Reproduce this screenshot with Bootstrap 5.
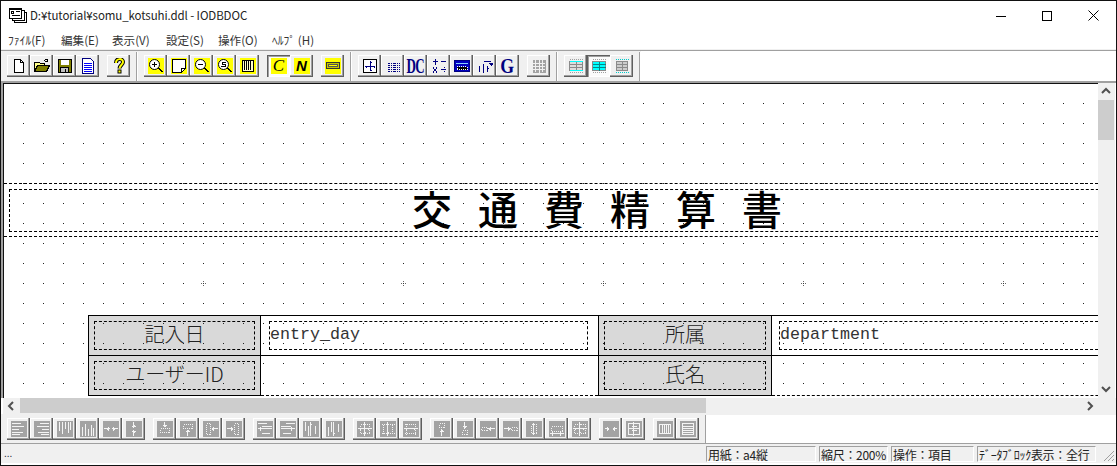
<!DOCTYPE html>
<html lang="ja">
<head>
    <meta charset="UTF-8">
    <meta name="viewport" content="width=device-width, initial-scale=1.0">
    <title>IODBDOC</title>
    <link href="https://cdn.jsdelivr.net/npm/bootstrap@5.3.0/dist/css/bootstrap.min.css" rel="stylesheet">
    <style>
        html, body { height: 100%; overflow: hidden; background: #fff; }
        body { font-family: "Noto Sans CJK JP", sans-serif; font-size: 12px; color: #000; }
        .app-window { width: 1117px; height: 466px; border: 1px solid #111; background: #fff; }
        .title-row { height: 29px; padding-left: 8px; }
        .title-text { margin-left: 3px; font-size: 11.5px; color: #222; letter-spacing: -.09px; white-space: nowrap; }
        .win-key { width: 46px; height: 29px; }
        .menu-row { height: 20px; color: #333; font-size: 11.6px; line-height: 1; border-bottom: 1px solid #f0f0f0; }
        .menu-item { position: absolute; top: 34px; }
        .tool-row { height: 31px; border-top: 1px solid #a0a0a0; padding-left: 6px; }
        .tool-face { background: #f0f0f0; }
        .tool-lower { height: 29px; border-top: 1px solid #f0f0f0; }
        .tool-key.btn {
            width: 23px; height: 22px; padding: 0; border: 0; border-radius: 0; background: #f0f0f0;
            box-shadow: inset -1px -1px #5f5f5f, inset -2px -2px #a0a0a0, inset 1px 1px #fff;
            display: flex; align-items: center; justify-content: center; flex: none; line-height: 1;
        }
        .tool-key.key-down { background: #fbfbfb; box-shadow: inset 1px 1px #5f5f5f, inset 2px 2px #a0a0a0, inset -1px -1px #fff; }
        .tool-key svg { display: block; width: 16px; height: 16px; }
        .tool-set { display: flex; margin-right: 8px; }
        .tool-set.set-end { margin-right: 6px; }
        .tool-rule { width: 2px; height: 29px; border-left: 1px solid #a0a0a0; border-right: 1px solid #fff; }
        .rule-gap { margin-right: 6px; }
        .ico { fill: none; stroke: #000; shape-rendering: crispEdges; }
        .ico-y { background: #ff0; }
        .ico-off { background: #a3a3a3; stroke: #f4f4f4; }
        .ico-navy { stroke: #000080; }
        .key-letter { width: 16px; height: 16px; background: #ff0; color: #000; text-align: center; }
        .letter-c { font: italic 400 17px/16px "Liberation Serif", serif; }
        .letter-n { font: italic 700 15px/16px "Liberation Sans", sans-serif; }
        .key-navy { display: block; font: 700 21px/1 "Liberation Serif", serif; color: #000080; }
        .navy-dc { letter-spacing: -1px; transform: scaleX(.62); }
        .navy-g { transform: scaleX(.85); }
        .work-row { height: 317px; border-top: 2px solid #a0a0a0; border-left: 2px solid #a0a0a0; }
        .sheet {
            width: 1095px; position: relative; overflow: hidden; border-top: 1px solid #111; border-left: 1px solid #111;
            background-color: #fff;
        }
        .sheet, .label-cell {
            background-image: conic-gradient(from 270deg at 1px 1px, #222 90deg, transparent 0);
            background-size: 20px 20px; background-position: 3px 3px; background-attachment: fixed;
        }
        .v-scroll { width: 17px; background: #f0f0f0; position: relative; }
        .v-thumb { position: absolute; left: 0; top: 17px; width: 16px; height: 40px; background: #cdcdcd; }
        .arrow-key { position: absolute; fill: none; stroke: #505050; stroke-width: 2; }
        .h-scroll { height: 16px; background: #f0f0f0; position: relative; margin-left: 2px; }
        .h-thumb { position: absolute; left: 17px; top: 0; width: 686px; height: 15px; background: #cdcdcd; }
        .dash-band { position: absolute; left: 0; width: 100%; height: 54px; top: 99px; border-top: 1px dashed #000; border-bottom: 1px dashed #000; }
        .dash-box { position: absolute; border: 1px dashed #000; }
        .band-inner { left: 5px; top: 105px; width: 1200px; height: 43px; }
        .sheet-title { position: absolute; left: 408px; top: 97px; font-size: 40px; line-height: 54px; font-weight: 500; letter-spacing: 26px; white-space: nowrap; }
        .grid-mark { position: absolute; top: 199px; width: 1px; height: 1px; background: #333; box-shadow: 0 -2px #666, 0 2px #666, -2px 0 #666, 2px 0 #666; }
        .form-grid { position: absolute; left: 84px; top: 231px; width: 1100px; display: grid; grid-template-columns: 173px 337px 174px 1fr; grid-template-rows: 40px 40px; border-top: 1px solid #000; }
        .label-cell, .value-cell { position: relative; border-bottom: 1px solid #000; }
        .label-cell { background-color: #d9d9d9; border-left: 1px solid #000; border-right: 1px solid #000; display: flex; align-items: center; justify-content: center; padding-bottom: 3px; font-size: 20px; font-weight: 300; color: #222; line-height: 1; }
        .value-cell { font: 16.67px/1 "Liberation Mono", monospace; color: #333; }
        .row-end { border-bottom: 1px dashed #000; }
        .label-box { left: 5px; top: 5px; right: 5px; bottom: 5px; }
        .value-box { left: 9px; top: 5px; width: 319px; height: 29px; padding: 5px 0 0 0; margin-left: -1px; }
        .value-long { width: 600px; margin-left: -2px; }
        .status-row { height: 20px; border-top: 1px solid #a0a0a0; background: #f0f0f0; position: relative; }
        .status-dots { position: absolute; left: 3px; top: 4px; font: 10px/12px "Liberation Sans", sans-serif; color: #123; }
        .status-cell { position: absolute; top: 2px; height: 16px; border-top: 1px solid #a0a0a0; border-left: 1px solid #a0a0a0; border-right: 1px solid #fff; border-bottom: 1px solid #fff; padding-left: 1px; line-height: 15px; font-size: 12px; color: #222; white-space: nowrap; letter-spacing: -.3px; }
        .size-grip { position: absolute; right: 1px; bottom: 1px; }
    </style>
</head>
<body>
<div class="app-window d-flex flex-column position-relative">
    <div class="title-row d-flex align-items-center">
        <svg width="18" height="16" viewBox="0 0 18 16" class="ico"><path d="M5.5 4.5h12v10h-12z" fill="#fff"/><path d="M3.5 2.5h12v10h-12z" fill="#fff"/><path d="M.5 .5h12v10h-12z" fill="#fff"/><path d="M.5 1.5h12" stroke="#000"/><path d="M2.5 3.5h2v2h-2zM6.5 3.5h4M2.5 7.5h8" stroke="#000"/></svg>
        <span class="title-text">D:¥tutorial¥somu_kotsuhi.ddl - IODBDOC</span>
        <div class="ms-auto d-flex">
            <div class="win-key d-flex align-items-center justify-content-center"><svg width="10" height="10" viewBox="0 0 10 10" class="ico"><path d="M0 5.5h10"/></svg></div>
            <div class="win-key d-flex align-items-center justify-content-center"><svg width="10" height="10" viewBox="0 0 10 10" class="ico"><path d="M.5 .5h9v9h-9z"/></svg></div>
            <div class="win-key d-flex align-items-center justify-content-center"><svg width="11" height="11" viewBox="0 0 11 11" fill="none" stroke="#000"><path d="M.5 .5l10 10M10.5 .5l-10 10"/></svg></div>
        </div>
    </div>
    <div class="menu-row">
        <span class="menu-item" style="left:7px">ﾌｧｲﾙ(F)</span>
        <span class="menu-item" style="left:60px">編集(E)</span>
        <span class="menu-item" style="left:111px">表示(V)</span>
        <span class="menu-item" style="left:165px">設定(S)</span>
        <span class="menu-item" style="left:217px">操作(O)</span>
        <span class="menu-item" style="left:271px">ﾍﾙﾌﾟ (H)</span>
    </div>

    <div class="tool-row d-flex">
        <div class="tool-face d-flex align-items-center" style="width:640px;margin-left:-6px;padding-left:6px">
            <div class="tool-set">
                <button class="btn tool-key"><svg class="ico" viewBox="0 0 16 16"><path d="M3.5 1.5h6l3 3v10h-9z" fill="#fff"/><path d="M9.5 1.5v3h3"/></svg></button>
                <button class="btn tool-key"><svg class="ico" viewBox="0 0 16 16"><path d="M.5 13.5v-9h5l1 1h4v2" fill="#ff8"/><path d="M.5 13.5l3-6h12l-3 6z" fill="#808000"/><path d="M9.5 3.5l2-2h2M13.5 .5v3h-3"/></svg></button>
                <button class="btn tool-key"><svg class="ico" viewBox="0 0 16 16"><path d="M1.5 1.5h13v13h-13z" fill="#808000"/><rect x="4" y="2" width="8" height="5" fill="#fff" stroke="none"/><path d="M3.5 9.5h8v5h-8z" fill="#c0c0c0"/><path d="M8.5 10.5v3" /></svg></button>
                <button class="btn tool-key"><svg class="ico ico-navy" viewBox="0 0 16 16"><path d="M2.5 .5h8l3 3v12h-11z" fill="#fff"/><path d="M4 5.5h8M4 7.5h8M4 9.5h8M4 11.5h8M4 13.5h8" stroke="#00f"/></svg></button>
            </div>
            <div class="tool-set set-end">
                <button class="btn tool-key"><svg viewBox="0 0 16 16" fill="none"><path d="M5 5c0-5 7-5 7-1 0 3-3.500 3-3.500 6.500" stroke="#000" stroke-width="4"/><path d="M5 5c0-5 7-5 7-1 0 3-3.500 3-3.500 6.500" stroke="#ff0" stroke-width="2"/><rect x="7" y="12" width="3" height="3" fill="#ff0" stroke="#000"/></svg></button>
            </div>
            <div class="tool-rule rule-gap"></div>
            <div class="tool-set">
                <button class="btn tool-key"><svg class="ico ico-y" viewBox="0 0 16 16"><circle cx="6.500" cy="6.500" r="5" fill="#fff" shape-rendering="auto"/><path d="M4 6.500h5M6.500 4v5M10 10l4 4M11 10l4 4"/></svg></button>
                <button class="btn tool-key"><svg class="ico ico-y" viewBox="0 0 16 16"><path d="M1.500 1.500h13v9l-4 4h-9z" fill="#fff"/><path d="M10.500 14.500v-4h4"/></svg></button>
                <button class="btn tool-key"><svg class="ico ico-y" viewBox="0 0 16 16"><circle cx="6.500" cy="6.500" r="5" fill="#fff" shape-rendering="auto"/><path d="M4 6.500h5M10 10l4 4M11 10l4 4"/></svg></button>
                <button class="btn tool-key"><svg class="ico ico-y" viewBox="0 0 16 16"><circle cx="6.500" cy="6.500" r="5" fill="#fff" shape-rendering="auto"/><path d="M9 4.500h-4v2h3v2h-4M10 10l4 4M11 10l4 4"/></svg></button>
                <button class="btn tool-key"><svg class="ico ico-y" viewBox="0 0 16 16"><path d="M2.500 2.500h11v11h-11z" fill="#ffc"/><path d="M4.500 3v10M6.500 3v10M8.500 3v10M10.500 3v10M4 4.500h8M4 6.500h8M4 8.500h8M4 10.500h8" stroke-dasharray="1 1"/></svg></button>
            </div>
            <div class="tool-set">
                <button class="btn tool-key key-down"><span class="key-letter letter-c">C</span></button>
                <button class="btn tool-key"><span class="key-letter letter-n">N</span></button>
            </div>
            <div class="tool-set set-end">
                <button class="btn tool-key"><svg class="ico ico-y" viewBox="0 0 16 16"><path d="M1.500 4.500h13v6h-13z" fill="#c8c800" stroke="#333"/><path d="M3.500 6.500h9v2h-9z" fill="#ff0" stroke="#555"/></svg></button>
            </div>
            <div class="tool-rule rule-gap"></div>
            <div class="tool-set">
                <button class="btn tool-key"><svg class="ico ico-navy" viewBox="0 0 16 16"><path d="M1.500 1.500h13v13h-13z" fill="#fff" stroke="#000"/><path d="M8.500 3v10M3 8.500h10M7.500 4.500h2M7.500 12.500h2M4.500 7.500v2M12.500 7.500v2"/></svg></button>
                <button class="btn tool-key"><svg class="ico ico-navy" viewBox="0 0 16 16"><path d="M3.500 5.500h11M3.500 7.500h11M3.500 9.500h11M3.500 11.500h11M3.500 13.500h11" stroke-dasharray="1 1"/><path d="M3.500 5v9M6.500 5v9M9.500 5v9M12.500 5v9" stroke-dasharray="1 1"/></svg></button>
                <button class="btn tool-key"><span class="key-navy navy-dc">DC</span></button>
                <button class="btn tool-key"><svg class="ico ico-navy" viewBox="0 0 16 16"><path d="M4.500 1v6M2 3.500h5M10 3.500h5M2 9.500l4 5M6 9.500l-4 5M10 11.500h5M12.500 9.500h1M12.500 13.500h1"/></svg></button>
                <button class="btn tool-key"><svg class="ico" viewBox="0 0 16 16"><path d="M.5 2.500h15v11h-15z" fill="#0000c0" stroke="#000080"/><path d="M2 5.500h12" stroke="#8cf"/><path d="M3 8.500h10v3h-10z" fill="#000" stroke="#fff" stroke-dasharray="1 1"/></svg></button>
                <button class="btn tool-key"><svg class="ico ico-navy" viewBox="0 0 16 16"><path d="M6.500 5.500v9M6.500 3.500h7M2.500 7.500v6M1.500 10.500h1M10.500 7.500v6M10.500 10.500h1M11.500 5.500h5M12.500 6.500h3M13.500 7.500h1"/></svg></button>
                <button class="btn tool-key"><span class="key-navy navy-g">G</span></button>
            </div>
            <div class="tool-set set-end">
                <button class="btn tool-key"><svg class="ico" viewBox="0 0 16 16" style="stroke:#a3a3a3"><path d="M2 2h5v12h-5zM9 2h5v12h-5z" fill="#a3a3a3"/><path d="M2 5.500h12M2 8.500h12M2 11.500h12M4.500 2v12M11.500 2v12" stroke="#f0f0f0"/></svg></button>
            </div>
            <div class="tool-rule rule-gap"></div>
            <div class="tool-set set-end">
                <button class="btn tool-key"><svg class="ico" viewBox="0 0 16 16" style="stroke:#8a8a8a"><path d="M1.500 1.500h13" stroke="#a0a0a0" stroke-dasharray="1 1"/><path d="M1.500 3.500h13v9h-13z" fill="#ddd"/><path d="M1.500 6.500h13M1.500 9.500h13M8.500 3.500v9"/><path d="M1.500 3.500h13M1.500 12.500h13" stroke="#0ff"/><path d="M1.500 14.500h13" stroke="#a0a0a0" stroke-dasharray="1 1"/></svg></button>
                <button class="btn tool-key key-down"><svg class="ico" viewBox="0 0 16 16" style="stroke:#8a8a8a"><path d="M1.500 1.500h13" stroke="#a0a0a0" stroke-dasharray="1 1"/><path d="M1.500 3.500h13v9h-13z" fill="#0ff"/><path d="M1.500 6.500h13M1.500 9.500h13M8.500 3.500v9" stroke="#088"/><path d="M1.500 14.500h13" stroke="#a0a0a0" stroke-dasharray="1 1"/></svg></button>
                <button class="btn tool-key"><svg class="ico" viewBox="0 0 16 16" style="stroke:#8a8a8a"><path d="M1.500 1.500h13M1.500 14.500h13" stroke="#0cc" stroke-dasharray="1 1"/><path d="M2.500 3.500h11v9h-11z" fill="#ccc"/><path d="M2.500 6.500h11M2.500 9.500h11M8.500 3.500v9"/></svg></button>
            </div>
            <div class="tool-rule"></div>
        </div>
    </div>

    <div class="work-row d-flex">
        <div class="sheet">
            <div class="dash-band"></div>
            <div class="dash-box band-inner"></div>
            <div class="sheet-title">交通費精算書</div>
            <span class="grid-mark" style="left:199px"></span>
            <span class="grid-mark" style="left:399px"></span>
            <span class="grid-mark" style="left:599px"></span>
            <span class="grid-mark" style="left:799px"></span>
            <span class="grid-mark" style="left:999px"></span>
            <div class="form-grid">
                <div class="label-cell"><div class="dash-box label-box"></div>記入日</div>
                <div class="value-cell"><div class="dash-box value-box">entry_day</div></div>
                <div class="label-cell"><div class="dash-box label-box"></div>所属</div>
                <div class="value-cell"><div class="dash-box value-box value-long">department</div></div>
                <div class="label-cell"><div class="dash-box label-box"></div>ユーザーID</div>
                <div class="value-cell row-end"></div>
                <div class="label-cell"><div class="dash-box label-box"></div>氏名</div>
                <div class="value-cell row-end"></div>
            </div>
        </div>
        <div class="v-scroll">
            <svg class="arrow-key" style="left:3px;top:4px" width="10" height="8" viewBox="0 0 10 8"><path d="M1 6l4-4 4 4"/></svg>
            <div class="v-thumb"></div>
            <svg class="arrow-key" style="left:3px;top:302px" width="10" height="8" viewBox="0 0 10 8"><path d="M1 2l4 4 4-4"/></svg>
        </div>
    </div>
    <div class="h-scroll">
        <svg class="arrow-key" style="left:4px;top:3px" width="8" height="10" viewBox="0 0 8 10"><path d="M6 1L2 5l4 4"/></svg>
        <div class="h-thumb"></div>
        <svg class="arrow-key" style="left:1083px;top:3px" width="8" height="10" viewBox="0 0 8 10"><path d="M2 1l4 4-4 4"/></svg>
    </div>

    <div class="tool-lower d-flex">
        <div class="tool-face d-flex align-items-center" style="width:704px;padding-left:6px">
            <div class="tool-set">
                <button class="btn tool-key"><svg class="ico ico-off" viewBox="0 0 16 16"><path d="M1 2.500h9M1 5.500h12M1 8.500h7M1 11.500h11M1 13.500h8"/></svg></button>
                <button class="btn tool-key"><svg class="ico ico-off" viewBox="0 0 16 16"><path d="M6 2.500h9M3 5.500h12M8 8.500h7M4 11.500h11M7 13.500h8"/></svg></button>
                <button class="btn tool-key"><svg class="ico ico-off" viewBox="0 0 16 16"><path d="M2.500 1v9M5.500 1v12M8.500 1v7M11.500 1v11M13.500 1v8"/></svg></button>
                <button class="btn tool-key"><svg class="ico ico-off" viewBox="0 0 16 16"><path d="M2.500 6v9M5.500 3v12M8.500 8v7M11.500 4v11M13.500 7v8"/></svg></button>
                <button class="btn tool-key"><svg class="ico ico-off" viewBox="0 0 16 16"><path d="M1 7.500h6M5.500 5.500v4M4.500 6.500v2M9 7.500h6M10.500 5.500v4M11.500 6.500v2"/></svg></button>
                <button class="btn tool-key"><svg class="ico ico-off" viewBox="0 0 16 16"><path d="M7.500 1v6M5.500 5.500h4M6.500 4.500h2M7.500 9v6M5.500 10.500h4M6.500 11.500h2"/></svg></button>
            </div>
            <div class="tool-set">
                <button class="btn tool-key"><svg class="ico ico-off" viewBox="0 0 16 16"><path d="M3.500 7.500h9v4h-9z" stroke-dasharray="1 1"/><path d="M7.500 1v5M5.500 4.500h4M6.500 5.500h2"/></svg></button>
                <button class="btn tool-key"><svg class="ico ico-off" viewBox="0 0 16 16"><path d="M3.500 3.500h9v4h-9z" stroke-dasharray="1 1"/><path d="M7.500 9v6M5.500 10.500h4M6.500 9.500h2"/></svg></button>
                <button class="btn tool-key"><svg class="ico ico-off" viewBox="0 0 16 16"><path d="M3.500 2.500h4v11h-4z" stroke-dasharray="1 1"/><path d="M9 7.500h6M10.500 5.500v4M9.500 6.500v2"/></svg></button>
                <button class="btn tool-key"><svg class="ico ico-off" viewBox="0 0 16 16"><path d="M8.500 2.500h4v11h-4z" stroke-dasharray="1 1"/><path d="M1 7.500h6M5.500 5.500v4M6.500 6.500v2"/></svg></button>
            </div>
            <div class="tool-set">
                <button class="btn tool-key"><svg class="ico ico-off" viewBox="0 0 16 16"><path d="M1 2.500h9M5 5.500h10M1 7.500h14M3.500 5.500v4M5 12.500h8"/></svg></button>
                <button class="btn tool-key"><svg class="ico ico-off" viewBox="0 0 16 16"><path d="M6 2.500h9M1 5.500h10M1 7.500h14M11.500 5.500v4M3 12.500h8"/></svg></button>
                <button class="btn tool-key"><svg class="ico ico-off" viewBox="0 0 16 16"><path d="M2.500 1v9M5.500 5v10M7.500 1v14M12.500 5v8M6.500 3.500h2"/></svg></button>
                <button class="btn tool-key"><svg class="ico ico-off" viewBox="0 0 16 16"><path d="M2.500 6v9M5.500 1v10M7.500 1v14M12.500 3v8M6.500 12.500h2"/></svg></button>
            </div>
            <div class="tool-set">
                <button class="btn tool-key"><svg class="ico ico-off" viewBox="0 0 16 16"><path d="M3.500 3.500h9v9h-9z" stroke-dasharray="1 1"/><path d="M1 7.500h14M7.500 1v14M6.500 3.500h2M6.500 11.500h2M3.500 6.500v2M11.500 6.500v2"/></svg></button>
                <button class="btn tool-key"><svg class="ico ico-off" viewBox="0 0 16 16"><path d="M1.500 3.500h13M1.500 12.500h13M3.500 3.500v9M12.500 3.500v9" stroke-dasharray="1 1"/><path d="M7.500 1v14M6.500 3.500h2M6.500 11.500h2"/></svg></button>
                <button class="btn tool-key"><svg class="ico ico-off" viewBox="0 0 16 16"><path d="M3.500 2.500v11M12.500 2.500v11M2 3.500h12M2 12.500h12" stroke-dasharray="1 1"/><path d="M1 7.500h14M3.500 6.500v2M11.500 6.500v2"/></svg></button>
            </div>
            <div class="tool-set">
                <button class="btn tool-key"><svg class="ico ico-off" viewBox="0 0 16 16"><path d="M5.500 2.500h5v4h-5z" stroke-dasharray="1 1"/><path d="M7.500 8v7M5.500 10.500h4M6.500 9.500h2"/></svg></button>
                <button class="btn tool-key"><svg class="ico ico-off" viewBox="0 0 16 16"><path d="M5.500 9.500h5v4h-5z" stroke-dasharray="1 1"/><path d="M7.500 1v7M5.500 5.500h4M6.500 6.500h2"/></svg></button>
                <button class="btn tool-key"><svg class="ico ico-off" viewBox="0 0 16 16"><path d="M1.500 6.500h6v3h-6z" stroke-dasharray="1 1"/><path d="M8 7.500h7M10.500 5.500v4M9.500 6.500v2"/></svg></button>
                <button class="btn tool-key"><svg class="ico ico-off" viewBox="0 0 16 16"><path d="M8.500 6.500h6v3h-6z" stroke-dasharray="1 1"/><path d="M1 7.500h7M5.500 5.500v4M6.500 6.500v2"/></svg></button>
                <button class="btn tool-key"><svg class="ico ico-off" viewBox="0 0 16 16"><path d="M5.500 3.500h5v9h-5z" stroke-dasharray="1 1"/><path d="M7.500 2v12M6.500 3.500h2M6.500 12.500h2"/></svg></button>
                <button class="btn tool-key"><svg class="ico ico-off" viewBox="0 0 16 16"><path d="M2.500 5.500h11v5h-11z" stroke-dasharray="1 1"/><path d="M1 12.500h14M3.500 10.500v4M11.500 10.500v4"/></svg></button>
                <button class="btn tool-key"><svg class="ico ico-off" viewBox="0 0 16 16"><path d="M2.500 3.500h11v9h-11z" stroke-dasharray="1 1"/><path d="M1 7.500h14M7.500 1v14M6.500 3.500h2M6.500 11.500h2M3.500 6.500v2M11.500 6.500v2"/></svg></button>
            </div>
            <div class="tool-set">
                <button class="btn tool-key"><svg class="ico ico-off" viewBox="0 0 16 16"><path d="M2 7.500h4M4.500 5.500v4M5.500 6.500v2M10 7.500h4M11.500 5.500v4M10.500 6.500v2"/></svg></button>
                <button class="btn tool-key"><svg class="ico ico-off" viewBox="0 0 16 16"><path d="M2.500 2.500h11v11h-11zM2 7.500h12M7.500 1v14M5.500 5.500h5M5.500 9.500h5"/></svg></button>
            </div>
            <div class="tool-set">
                <button class="btn tool-key"><svg class="ico ico-off" viewBox="0 0 16 16"><path d="M2.500 3.500h11v9h-11zM5.500 4v8M7.500 4v8M9.500 4v8M11.500 4v8"/></svg></button>
                <button class="btn tool-key"><svg class="ico ico-off" viewBox="0 0 16 16"><path d="M2.500 2.500h11v11h-11zM3 5.500h10M3 7.500h10M3 9.500h10M3 11.500h10"/></svg></button>
            </div>
        </div>
        <div class="tool-rule" style="height:100%"></div>
    </div>

    <div class="status-row">
        <span class="status-dots">...</span>
        <div class="status-cell" style="left:705px;width:110px">用紙：a4縦</div>
        <div class="status-cell" style="left:818px;width:69px">縮尺：200%</div>
        <div class="status-cell" style="left:890px;width:83px">操作：項目</div>
        <div class="status-cell" style="left:976px;width:119px">ﾃﾞｰﾀﾌﾞﾛｯｸ表示：全行</div>
        <svg class="size-grip" width="14" height="14" viewBox="0 0 14 14" fill="none" stroke="#a0a0a0"><path d="M13 3L3 13M13 7l-6 6M13 11l-2 2"/></svg>
    </div>
</div>
<script src="https://cdn.jsdelivr.net/npm/bootstrap@5.3.0/dist/js/bootstrap.bundle.min.js"></script>
</body>
</html>
